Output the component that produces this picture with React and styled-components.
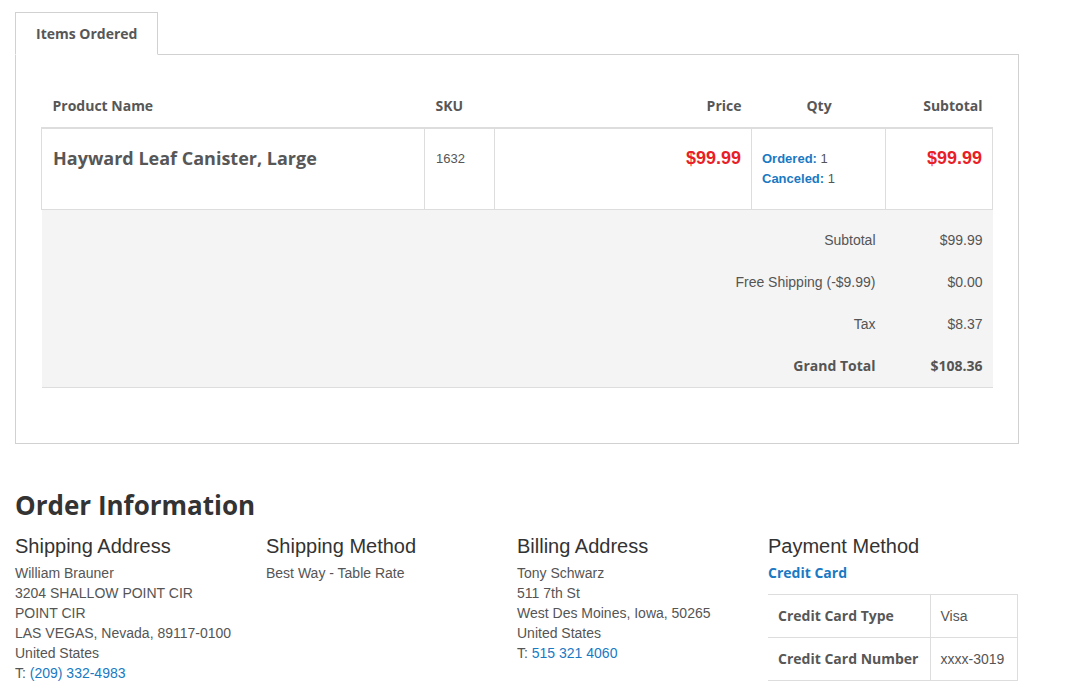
import React from 'react'
import styled, { createGlobalStyle } from 'styled-components'

const GlobalStyle = createGlobalStyle`
  body {
    margin: 0;
    background: #fff;
    font-family: "Liberation Sans", Arial, sans-serif;
    color: #555;
  }
`;

const Page = styled.div`
  width: 1004px;
  padding: 12px 15px 20px;
`;

const Tabs = styled.div`
  display: flex;
`;

const Tab = styled.div`
  width: 143px;
  height: 43px;
  border: 1px solid #d1d1d1;
  border-bottom: 1px solid #fff;
  margin-bottom: -1px;
  background: #fff;
  display: flex;
  align-items: center;
  padding: 0 0 1px 20px;
  box-sizing: border-box;
  font-family: "Open Sans", sans-serif;
  font-weight: 700;
  font-size: 14px;
  color: #575757;
  position: relative;
  z-index: 1;
`;

const Panel = styled.div`
  border: 1px solid #d1d1d1;
  padding: 30px 25px 55px;
`;

const Table = styled.table`
  width: 951px;
  border-collapse: collapse;
  table-layout: fixed;
`;

const Th = styled.th`
  font-family: "Open Sans", sans-serif;
  font-weight: 700;
  font-size: 14px;
  color: #575757;
  text-align: ${p => p.$align || 'left'};
  padding: 0 10px 2px 11px;
  height: 40px;
  border-bottom: 2px solid #ddd;
`;

const Td = styled.td`
  vertical-align: top;
  border: 1px solid #ddd;
  border-top: none;
  text-align: ${p => p.$align || 'left'};
  padding: ${p => p.$pad || '20px 10px 0 11px'};
  height: 81px;
  box-sizing: border-box;
  font-size: 14px;
  color: #555;
`;

const ProductName = styled.div`
  font-family: "Open Sans", sans-serif;
  font-weight: 700;
  font-size: 18px;
  color: #575757;
  line-height: 18px;
`;

const Sku = styled.div`
  font-size: 13px;
  line-height: 20px;
`;

const Price = styled.div`
  font-family: "Liberation Sans", Arial, sans-serif;
  font-weight: 700;
  font-size: 18px;
  color: #e81f28;
  line-height: 18px;
`;

const QtyLine = styled.div`
  font-size: 13px;
  line-height: 20px;
  color: #555;
  b {
    color: #1979c3;
  }
`;

const TotalsRow = styled.tr`
  background: #f4f4f4;
  &:last-child td {
    border-bottom: 1px solid #ddd;
  }
`;

const TotalCell = styled.td`
  text-align: right;
  padding: ${p => (p.$first ? '10px 10px 0' : '0 10px')};
  height: ${p => (p.$first ? '52px' : '42px')};
  box-sizing: border-box;
  font-size: 14px;
  color: #555;
  font-family: ${p => (p.$strong ? '"Open Sans", sans-serif' : '"Liberation Sans", Arial, sans-serif')};
  font-weight: ${p => (p.$strong ? 700 : 400)};
`;

const InfoTitle = styled.h2`
  margin: 45px 0 13px;
  font-family: "Open Sans", sans-serif;
  font-weight: 700;
  font-size: 26px;
  line-height: 32px;
  color: #333;
`;

const InfoGrid = styled.div`
  display: grid;
  grid-template-columns: repeat(4, 251px);
`;

const InfoBlock = styled.div``;

const BlockTitle = styled.h3`
  margin: 0 0 5px;
  font-family: "Liberation Sans", Arial, sans-serif;
  font-weight: 400;
  font-size: 20px;
  line-height: 24px;
  color: #333;
`;

const Lines = styled.div`
  font-size: 14px;
  line-height: 20px;
  color: #555;
`;

const Link = styled.a`
  color: #1979c3;
  text-decoration: none;
`;

const MethodName = styled.div`
  font-family: "Open Sans", sans-serif;
  font-weight: 700;
  font-size: 14px;
  line-height: 20px;
  color: #1979c3;
  margin-bottom: 11px;
`;

const PayTable = styled.table`
  width: 250px;
  border-collapse: collapse;
  table-layout: fixed;
  td {
    height: 43px;
    border-top: 1px solid #ddd;
    border-bottom: 1px solid #ddd;
    font-size: 14px;
    padding: 0 10px;
    box-sizing: border-box;
  }
`;

const PayLabel = styled.td`
  width: 162px;
  font-family: "Open Sans", sans-serif;
  font-weight: 700;
  color: #575757;
  border-right: 1px solid #ddd;
`;

const PayValue = styled.td`
  color: #555;
  border-right: 1px solid #ddd;
`;

const totals = [
  ['Subtotal', '$99.99'],
  ['Free Shipping (-$9.99)', '$0.00'],
  ['Tax', '$8.37'],
  ['Grand Total', '$108.36', true],
];

const App = () => {
  return (
    <Page>
      <GlobalStyle />
      <Tabs>
        <Tab>Items Ordered</Tab>
      </Tabs>
      <Panel>
        <Table>
          <colgroup>
            <col style={{ width: 383 }} />
            <col style={{ width: 70 }} />
            <col style={{ width: 257 }} />
            <col style={{ width: 134 }} />
            <col style={{ width: 107 }} />
          </colgroup>
          <thead>
            <tr>
              <Th>Product Name</Th>
              <Th>SKU</Th>
              <Th $align="right">Price</Th>
              <Th $align="center">Qty</Th>
              <Th $align="right">Subtotal</Th>
            </tr>
          </thead>
          <tbody>
            <tr>
              <Td><ProductName>Hayward Leaf Canister, Large</ProductName></Td>
              <Td><Sku>1632</Sku></Td>
              <Td $align="right"><Price>$99.99</Price></Td>
              <Td $pad="20px 10px 0 10px">
                <QtyLine><b>Ordered:</b> 1</QtyLine>
                <QtyLine><b>Canceled:</b> 1</QtyLine>
              </Td>
              <Td $align="right"><Price>$99.99</Price></Td>
            </tr>
          </tbody>
          <tfoot>
            {totals.map(([label, value, strong], i) => (
              <TotalsRow key={label}>
                <TotalCell colSpan={4} $first={i === 0} $strong={strong}>{label}</TotalCell>
                <TotalCell $first={i === 0} $strong={strong}>{value}</TotalCell>
              </TotalsRow>
            ))}
          </tfoot>
        </Table>
      </Panel>

      <InfoTitle>Order Information</InfoTitle>
      <InfoGrid>
        <InfoBlock>
          <BlockTitle>Shipping Address</BlockTitle>
          <Lines>
            William Brauner<br />
            3204 SHALLOW POINT CIR<br />
            POINT CIR<br />
            LAS VEGAS, Nevada, 89117-0100<br />
            United States<br />
            T: <Link href="#">(209) 332-4983</Link>
          </Lines>
        </InfoBlock>
        <InfoBlock>
          <BlockTitle>Shipping Method</BlockTitle>
          <Lines>Best Way - Table Rate</Lines>
        </InfoBlock>
        <InfoBlock>
          <BlockTitle>Billing Address</BlockTitle>
          <Lines>
            Tony Schwarz<br />
            511 7th St<br />
            West Des Moines, Iowa, 50265<br />
            United States<br />
            T: <Link href="#">515 321 4060</Link>
          </Lines>
        </InfoBlock>
        <InfoBlock>
          <BlockTitle>Payment Method</BlockTitle>
          <MethodName>Credit Card</MethodName>
          <PayTable>
            <tbody>
              <tr>
                <PayLabel>Credit Card Type</PayLabel>
                <PayValue>Visa</PayValue>
              </tr>
              <tr>
                <PayLabel>Credit Card Number</PayLabel>
                <PayValue>xxxx-3019</PayValue>
              </tr>
            </tbody>
          </PayTable>
        </InfoBlock>
      </InfoGrid>
    </Page>
  )
}

export default App
